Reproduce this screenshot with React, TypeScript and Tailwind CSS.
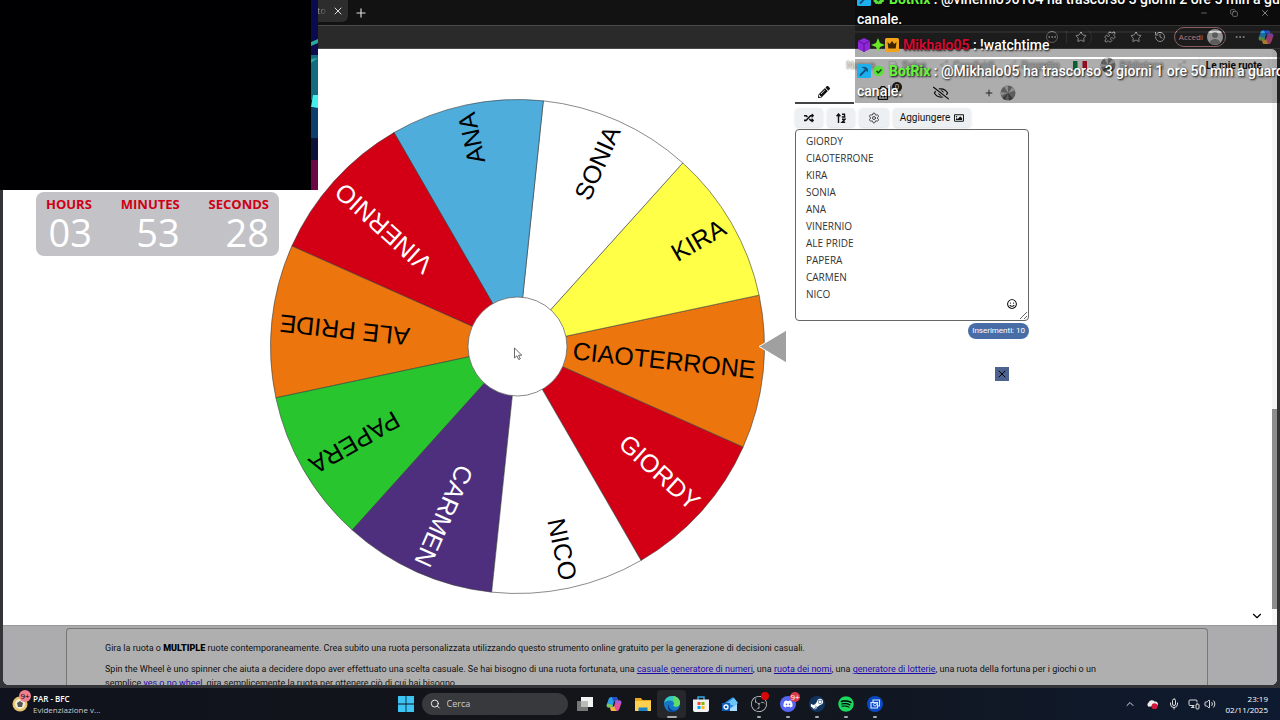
import React from 'react';
import { FaDiscord, FaPencilAlt, FaRandom, FaRegEyeSlash, FaRegImage, FaRegSmile, FaRegTrashAlt, FaShareAlt, FaSave, FaSpotify, FaSteamSymbol } from 'react-icons/fa';
import { SiObsstudio } from 'react-icons/si';
import { ChevronDown, ChevronUp, Copy, History, Mic, Minus, MonitorSmartphone, MoreHorizontal, Plus, Puzzle, Search, Settings, Star, Volume2, X } from 'lucide-react';

type Slice = { name: string; fill: string; ink: string };

const SLICES: Slice[] = [
  { name: 'GIORDY', fill: '#d30015', ink: '#fff' },
  { name: 'CIAOTERRONE', fill: '#ec750d', ink: '#000' },
  { name: 'KIRA', fill: '#ffff47', ink: '#000' },
  { name: 'SONIA', fill: '#ffffff', ink: '#000' },
  { name: 'ANA', fill: '#4eaddb', ink: '#000' },
  { name: 'VINERNIO', fill: '#d30015', ink: '#fff' },
  { name: 'ALE PRIDE', fill: '#ec750d', ink: '#000' },
  { name: 'PAPERA', fill: '#28c52e', ink: '#000' },
  { name: 'CARMEN', fill: '#4e2f7e', ink: '#fff' },
  { name: 'NICO', fill: '#ffffff', ink: '#000' },
];

const STEP = 360 / SLICES.length;
const CENTER = 247.5;
const RADIUS = 247;
const START = 24;

const point = (deg: number) => {
  const rad = (deg * Math.PI) / 180;
  return `${CENTER + RADIUS * Math.cos(rad)} ${CENTER + RADIUS * Math.sin(rad)}`;
};

const Wheel: React.FC = () => (
  <svg viewBox="0 0 517 496" className="w-[517px] shrink-0" role="img" aria-label="Ruota">
    {SLICES.map((s, i) => {
      const from = START - i * STEP;
      return (
        <g key={s.name}>
          <path d={`M${CENTER} ${CENTER} L${point(from)} A${RADIUS} ${RADIUS} 0 0 1 ${point(from + STEP)} Z`} fill={s.fill} stroke="#3a3a3a" strokeWidth="0.6" />
          <text
            x={CENTER + 239}
            y={CENTER + 7}
            textAnchor="end"
            fontSize="25"
            fill={s.ink}
            fontFamily="'Liberation Sans', sans-serif"
            transform={`rotate(${from + STEP / 2} ${CENTER} ${CENTER})`}
          >
            {s.name}
          </text>
        </g>
      );
    })}
    <circle cx={CENTER} cy={CENTER} r="49.5" fill="#fff" stroke="#555" strokeWidth="0.7" />
    <path d="M489 247.500 516.500 231V264Z" fill="#a0a0a0" stroke="#fff" strokeWidth="1" />
    <path d="M244.500 249v10l2.400-2.200 1.800 3.800 1.600-.8-1.700-3.600h3.200z" fill="#fff" stroke="#444" strokeWidth="0.8" />
  </svg>
);

const MiniWheel: React.FC = () => (
  <svg viewBox="0 0 16 16" className="size-4">
    <circle cx="8" cy="8" r="7.500" fill="#8a8a8a" />
    <path d="M8 8 4 1.500A7.500 7.500 0 0 1 8 .5ZM8 8 12.500 2A7.500 7.500 0 0 1 15 5.500ZM8 8 1 10.500A7.500 7.500 0 0 1 .6 7Z" fill="#cfcfcf" />
    <path d="M8 8 13 13.600A7.500 7.500 0 0 1 9 15.400ZM8 8 5 15A7.500 7.500 0 0 1 2.500 13Z" fill="#555" />
  </svg>
);

const CopilotIcon: React.FC = () => (
  <svg viewBox="0 0 16 16" className="size-4">
    <path d="M5.500 1h4.200c1 0 1.400.7 1.700 1.600L12 5H9.500C8.300 5 8 5.800 7.600 7L6.300 11.500H2.500C.8 11.500.4 10 .9 8.300L2.600 3.300C3.200 1.800 4 1 5.500 1Z" fill="#2b9fe8" />
    <path d="M5.500 1h4.200c1 0 1.400.7 1.700 1.600L12 5H9.500C8.700 5 8.200 5.400 7.900 6L7 4C6.400 2.300 6 1.500 5.500 1Z" fill="#2450c8" />
    <path d="M10.500 15H6.300c-1 0-1.400-.7-1.700-1.600L4 11h2.500c1.200 0 1.500-.8 1.900-2L9.700 4.500h3.800c1.700 0 2.100 1.500 1.600 3.200l-1.700 5c-.6 1.500-1.400 2.300-2.900 2.300Z" fill="#e0529c" />
    <path d="M10.500 15H6.300c-1 0-1.400-.7-1.700-1.600L4 11h2.500c.8 0 1.300-.4 1.600-1 .8 2 1.400 4 2.400 5Z" fill="#f5b53d" />
    <path d="m1.200 7.400-.3.900C.4 10 .8 11.500 2.500 11.500h3.800L7 9Z" fill="#7dc857" />
    <path d="m9.700 4.500 3.800 0c1.700 0 2.100 1.500 1.600 3.200L9 7Z" fill="#a45be0" />
  </svg>
);

const EdgeIcon: React.FC = () => (
  <svg viewBox="0 0 16 16" className="size-4">
    <circle cx="8" cy="8" r="8" fill="#1578c8" />
    <path d="M0 7.500C.4 3 3.800 0 8 0c4.800 0 8 3.400 8 6.800 0 2.700-2 4-4 4-1.600 0-2.600-.6-2.600-1.200 0-.5.700-.7.7-2C10 5.800 8 4.400 5.500 4.400 3 4.400.6 5.600 0 7.500Z" fill="#35c6c0" />
    <path d="M9 .1C13.500.5 16 3.600 16 6.800c0 2.700-2 4-4 4-1.600 0-2.600-.6-2.600-1.200 0-.5.700-.7.700-2C10 5 9.500 2 9 .1Z" fill="#5fdc6c" />
    <path d="M5.600 7C4.200 9 5 12.500 8 14c2 1 4.500.6 6.300-1.100-1.500 2.300-4 3.300-6.600 3.100C4 15.500 2.500 11 5.600 7Z" fill="#0c3f8c" />
  </svg>
);

const StoreIcon: React.FC = () => (
  <svg viewBox="0 0 16 16" className="size-4">
    <path d="M5 4V1h6v3" fill="none" stroke="#35a8e0" strokeWidth="1.500" />
    <path d="M0 3.500h16V14a2 2 0 0 1-2 2H2a2 2 0 0 1-2-2Z" fill="#f2f2f2" />
    <path d="M4.500 6h3v3h-3z" fill="#f25022" />
    <path d="M8.500 6h3v3h-3z" fill="#7fba00" />
    <path d="M4.500 10h3v3h-3z" fill="#00a4ef" />
    <path d="M8.500 10h3v3h-3z" fill="#ffb900" />
  </svg>
);

const ChatPick: React.FC = () => (
  <svg viewBox="0 0 14 14" className="size-3.5 shrink-0">
    <rect width="14" height="14" rx="1.500" fill="#1db0ee" />
    <path d="m3 11.500 5.500-5.500" stroke="#12507c" strokeWidth="1.800" />
    <path d="M4.500 3.500C7 2 10 3 11 5.500v3L7 4.500Z" fill="#12507c" />
  </svg>
);

const BotRow: React.FC<{ children: React.ReactNode }> = ({ children }) => (
  <div className="bg-black/32 px-0.5 py-0.5">
    <p className="flex items-center">
      <ChatPick />
      <svg viewBox="0 0 12 12" className="ml-0.5 mr-1 size-3 shrink-0">
        <path d="m6 .5 1.600 1 1.900.1.600 1.800 1.300 1.300-.6 1.800.2 1.900-1.700.9-1 1.600-1.900-.2L6 11.500l-1.400-.8-1.900.2-1-1.600L.4 8.400l.2-1.900L0 4.700l1.300-1.300.6-1.800 1.900-.1Z" fill="#5be03a" />
        <path d="m3.500 6 1.800 1.800L8.500 4.500" stroke="#123d17" strokeWidth="1.500" fill="none" />
      </svg>
      <span className="text-[#63f53d]">BotRix</span>
      <span className="whitespace-pre font-medium"> : {children}</span>
    </p>
    <p className="font-medium">canale.</p>
  </div>
);

const ChatOverlay: React.FC = () => (
  <aside className="absolute right-0 top-0 z-20 flex h-[103px] w-[425px] flex-col justify-end gap-0.5 overflow-hidden whitespace-nowrap font-['Roboto',sans-serif] text-sm font-bold leading-5 text-white [text-shadow:1px_1px_2px_#000]">
    <BotRow>@vinernio96104 ha trascorso 3 giorni 2 ore 5 min a guardare il</BotRow>
    <p className="flex items-center bg-black/32 px-0.5 py-0.5">
      <svg viewBox="0 0 14 14" className="size-3.5">
        <path d="m7 0 6 3v8l-6 3-6-3V3Z" fill="#8f27d8" />
        <path d="m1 3 6 3 6-3M7 6v8" stroke="#5b1296" fill="none" />
      </svg>
      <svg viewBox="0 0 14 14" className="size-3.5"><path d="M7 0 9 5l5 2-5 2-2 5-2-5-5-2 5-2Z" fill="#6be824" /></svg>
      <svg viewBox="0 0 14 14" className="mr-1 size-3.5">
        <rect width="14" height="14" rx="1.500" fill="#f3a317" />
        <path d="m2.500 4 2.300 2L7 3l2.200 3 2.300-2-.8 6.500H3.300Z" fill="#3c2400" />
      </svg>
      <span className="text-[#cf0a32]">Mikhalo05</span>
      <span className="whitespace-pre font-medium"> : !watchtime</span>
    </p>
    <BotRow>@Mikhalo05 ha trascorso 3 giorni 1 ore 50 min a guardare il</BotRow>
  </aside>
);

const CamOverlay: React.FC = () => (
  <div className="absolute left-0 top-0 z-20 flex h-[190px] w-[318px] bg-[#000003]">
    <svg viewBox="0 0 7 190" className="ml-auto w-[7px]">
      <path d="M0 0h7v190H0z" fill="#0b0a4e" />
      <path d="M0 55h7v45H0z" fill="#136d80" />
      <path d="M0 42l7-3v4l-7 3zM0 59l7-1-7 5z" fill="#28a99a" />
      <path d="M2 95h5v13l-7-1z" fill="#45f0ea" />
      <path d="M0 108h7v30H0z" fill="#0d3f6e" />
      <path d="M0 138h7v22H0z" fill="#0a1236" />
      <path d="M0 160h7v30H0z" fill="#6b0647" />
    </svg>
  </div>
);

const COUNTDOWN = [
  { label: 'HOURS', value: '03' },
  { label: 'MINUTES', value: '53' },
  { label: 'SECONDS', value: '28' },
];

const Countdown: React.FC = () => (
  <div className="absolute left-9 top-48 z-20 flex w-[243px] justify-between rounded-lg bg-[#c3c2c7] px-2.5 pb-1 pt-1 font-['Open_Sans',sans-serif]">
    {COUNTDOWN.map((c) => (
      <div key={c.label} className="text-right">
        <div className="text-[13px] font-bold leading-4 text-[#cf0014]">{c.label}</div>
        <div className="text-[38px] leading-10 text-white">{c.value}</div>
      </div>
    ))}
  </div>
);

const BrowserBar: React.FC = () => (
  <header>
    <div className="flex h-[25px] items-center justify-between bg-[#121212] pr-2.5 text-[#ddd]">
      <div className="flex h-full items-center">
        <div className="flex h-[22px] w-[348px] items-center justify-end gap-1.5 self-start rounded-br-md bg-[#2d2d2d] pr-1 font-['Open_Sans',sans-serif] text-[9px]">
          <span className="bg-linear-to-r from-white to-[#555] bg-clip-text text-transparent">etto</span>
          <button aria-label="Chiudi scheda"><X className="size-3" /></button>
        </div>
        <button aria-label="Nuova scheda" className="ml-1.5"><Plus className="size-3.5" /></button>
      </div>
      <div className="flex items-center gap-[22px]">
        <button aria-label="Riduci"><Minus className="size-2" /></button>
        <button aria-label="Ripristina"><Copy className="size-2" /></button>
        <button aria-label="Chiudi"><X className="size-2.5" /></button>
      </div>
    </div>
    <div className="flex h-6 items-center justify-end border-y border-[#4a4a4a] bg-[#2a2a2a] pr-1.5 text-[#ccc]">
      <div className="mr-3 flex h-5 items-center gap-2 rounded-r-full border-r border-[#444] pr-1">
        <MoreHorizontal className="size-3 rounded-full border border-[#888]" />
        <span className="h-3 w-px bg-[#444]" />
        <Star className="size-3" />
      </div>
      <Puzzle className="mr-3.5 size-3" />
      <Star className="mr-3 size-3" />
      <History className="mr-2 size-3" />
      <button className="mr-2 flex h-5 items-center gap-1 rounded-full border border-[#c98a90] pl-1 pr-0.5 font-['Open_Sans',sans-serif] text-[8px] text-[#ffb3b8]">
        Accedi
        <svg viewBox="0 0 16 16" className="size-4">
          <circle cx="8" cy="8" r="8" fill="#d5d5d5" />
          <circle cx="8" cy="6" r="3" fill="#888" />
          <path d="M2.500 13.500a6 6 0 0 1 11 0 8 8 0 0 1-11 0Z" fill="#888" />
        </svg>
      </button>
      <MoreHorizontal className="mr-3 size-3" />
      <CopilotIcon />
    </div>
  </header>
);

const SiteNav: React.FC = () => (
  <nav className="flex h-8 items-center justify-end gap-[13px] pr-1 font-['Roboto',sans-serif] text-[10px] text-[#e2e2e2] [text-shadow:0_0_2px_#333]">
    <a href="#nuovo">Nuovo</a>
    <a href="#salva" className="flex items-center gap-1"><FaSave className="size-2.5" />Salva</a>
    <a href="#condividi" className="flex items-center gap-1"><FaShareAlt className="size-2.5" />Condividi</a>
    <a href="#progetto" className="flex items-center gap-1"><FaPencilAlt className="size-2.5" />Progetto</a>
    <svg viewBox="0 0 14 9" className="w-3.5">
      <path d="M0 0h14v9H0z" fill="#fff" />
      <path d="M0 0h4.500v9H0z" fill="#0a8f45" />
      <path d="M9.500 0H14v9H9.500z" fill="#d4142c" />
    </svg>
    <a href="#biblioteca" className="flex items-center gap-1"><MiniWheel />Biblioteca</a>
    <FaShareAlt className="size-2.5" />
    <button className="rounded-sm px-1.5 py-1 text-[10px] font-bold text-[#111] shadow-sm [text-shadow:none]">Le mie ruote</button>
  </nav>
);

const EntriesPanel: React.FC = () => (
  <section className="flex w-[234px] shrink-0 flex-col font-['Roboto',sans-serif]">
    <div className="grid h-[22px] grid-cols-4 items-center text-[#111]">
      <button aria-label="Modifica" className="flex h-full items-center justify-center border-b-2 border-[#444]"><FaPencilAlt className="size-3" /></button>
      <button aria-label="Elimina" className="relative flex justify-center">
        <FaRegTrashAlt className="size-3.5" />
        <span className="absolute -top-1 right-2.5 size-2.5 rounded-full bg-[#222] text-center text-[8px] leading-[10px] text-white">0</span>
      </button>
      <button aria-label="Nascondi" className="flex justify-center"><FaRegEyeSlash className="size-4" /></button>
      <button aria-label="Aggiungi ruota" className="flex items-center justify-center gap-1.5"><Plus className="size-2.5" /><MiniWheel /></button>
    </div>
    <div className="mb-0.5 mt-1 flex h-[19px] gap-1 text-[10px] text-[#111]">
      <button aria-label="Mescola" className="flex w-7 items-center justify-center rounded-sm bg-[#edf0f2] shadow-sm"><FaRandom className="size-2.5" /></button>
      <button aria-label="Ordina" className="flex w-7 items-center justify-center rounded-sm bg-[#edf0f2] shadow-sm">
        <svg viewBox="0 0 10 10" className="size-2.5" fill="none" stroke="#111" strokeWidth="1.400">
          <path d="M2.500 10V1.500M.6 3.200 2.500 1l1.900 2.200M6 1.200h2.500V4M6 6.200h3L6 9.300h3.200M5.800 4h3.600" />
        </svg>
      </button>
      <button aria-label="Opzioni" className="flex w-[30px] items-center justify-center rounded-sm bg-[#edf0f2] text-[#444] shadow-sm"><Settings className="size-3" /></button>
      <button className="flex w-[78px] items-center justify-center gap-1 rounded-sm bg-[#edf0f2] shadow-sm">Aggiungere <FaRegImage className="size-2.5" /></button>
    </div>
    <div className="relative">
      <textarea
        aria-label="Inserimenti"
        defaultValue={SLICES.map((s) => s.name).join('\n')}
        className="block h-[192px] w-full overflow-hidden rounded-sm border border-[#666] bg-white px-2.5 py-[3px] font-['Open_Sans',sans-serif] text-[10px] leading-[17px] text-[#333]"
      />
      <button aria-label="Emoji" className="absolute bottom-3 right-3"><FaRegSmile className="size-2.5" /></button>
    </div>
    <span className="mt-0.5 self-end rounded-full bg-[#486da6] px-1 text-[8px] leading-4 text-white">Inserimenti: 10</span>
    <button aria-label="Chiudi annuncio" className="mr-5 mt-7 flex size-3.5 items-center justify-center self-end bg-[#4c6390] text-black"><X className="size-3" /></button>
  </section>
);

const link = 'text-[#1a0dab] underline';

const SiteText: React.FC = () => (
  <footer className="h-15 shrink-0 overflow-hidden border-t border-[#999] bg-[#acacaf] pl-[63px] pr-[69px] pt-0.5">
    <article className="rounded-t-sm border border-b-0 border-[#777] bg-[#afafaf] px-[38px] pt-3 font-['Roboto',sans-serif] text-[9px] leading-[14px] text-[#111]">
      <p className="mb-[7px]">Gira la ruota o <b className="font-black text-black">MULTIPLE</b> ruote contemporaneamente. Crea subito una ruota personalizzata utilizzando questo strumento online gratuito per la generazione di decisioni casuali.</p>
      <p className="pr-13">
        Spin the Wheel è uno spinner che aiuta a decidere dopo aver effettuato una scelta casuale. Se hai bisogno di una ruota fortunata, una <a href="#numeri" className={link}>casuale generatore di numeri</a>, una <a href="#nomi" className={link}>ruota dei nomi</a>, una <a href="#lotterie" className={link}>generatore di lotterie</a>, una ruota della fortuna per i giochi o un semplice <a href="#yesno" className={link}>yes o no wheel</a>, gira semplicemente la ruota per ottenere ciò di cui hai bisogno.
      </p>
    </article>
  </footer>
);

const TaskApp: React.FC<{ label: string; state?: 'open' | 'active'; children: React.ReactNode }> = ({ label, state, children }) => (
  <button aria-label={label} className={`relative flex h-7 w-[29px] items-center justify-center ${state === 'active' ? 'rounded-sm bg-white/8' : ''}`}>
    {children}
    {state && <span className={`absolute bottom-0 h-0.5 rounded-full bg-[#aaa] ${state === 'active' ? 'w-2.5' : 'w-1'}`} />}
  </button>
);

const Taskbar: React.FC = () => (
  <div className="grid h-8 shrink-0 grid-cols-[1fr_auto_1fr] items-center bg-linear-to-r from-[#10131d] via-[#131519] to-[#0e1a30] font-['Open_Sans',sans-serif] text-[8px] text-white">
    <div className="flex items-center gap-1 pl-3">
      <div className="relative pr-px">
        <svg viewBox="0 0 16 16" className="size-4"><circle cx="8" cy="8" r="7.500" fill="#e8c66f" /><circle cx="8" cy="8" r="5" fill="#f5efd8" /><path d="m8 5 3 2-1 4H6L5 7Z" fill="#555" /></svg>
        <span className="absolute -right-0.5 -top-1.5 size-3 rounded-full bg-[#f0808e] text-center text-[8px] leading-3 text-black">9+</span>
      </div>
      <div className="leading-[11px]">
        <div className="font-semibold">PAR - BFC</div>
        <div className="text-[#ccc]">Evidenziazione v...</div>
      </div>
    </div>
    <div className="flex items-center">
      <TaskApp label="Start">
        <svg viewBox="0 0 16 16" className="size-4" fill="#3cc4f5"><path d="M0 0h7.600v7.600H0zM8.400 0H16v7.600H8.400zM0 8.400h7.600V16H0zM8.400 8.400H16V16H8.400z" /></svg>
      </TaskApp>
      <label className="mx-0.5 flex h-[22px] w-[146px] items-center gap-1.5 rounded-full bg-[#38393c] pl-2">
        <Search className="size-3" />
        <input placeholder="Cerca" aria-label="Cerca" className="w-full bg-transparent text-[9px] outline-none placeholder:text-[#ccc]" />
      </label>
      <TaskApp label="Visualizzazione attività">
        <svg viewBox="0 0 16 16" className="size-4"><path d="M4 1h12v10H4z" fill="#f3f3f3" /><path d="M0 5h11v10H0z" fill="#777" /><path d="M4 5h7v6H4z" fill="#bbb" /></svg>
      </TaskApp>
      <TaskApp label="Copilot"><CopilotIcon /></TaskApp>
      <TaskApp label="Esplora file">
        <svg viewBox="0 0 16 16" className="size-4"><path d="M0 2h6l1.500 2H16v4H0z" fill="#e8a91c" /><path d="M0 5h16v10H0z" fill="#fdd04f" /><path d="M3.500 11.500h9V15h-9z" fill="#1d83c8" /></svg>
      </TaskApp>
      <TaskApp label="Edge" state="active"><EdgeIcon /></TaskApp>
      <TaskApp label="Store"><StoreIcon /></TaskApp>
      <TaskApp label="Outlook">
        <svg viewBox="0 0 16 16" className="size-4"><path d="M1 8 11 1l4 5v9H3z" fill="#2b8be8" /><path d="M5 7l7-5 4 5-4 3z" fill="#6cc6f7" /><path d="M4 15 15 8v7z" fill="#a6dcff" /><path d="M0 7h8v8H0z" fill="#0f5bb8" /><circle cx="4" cy="11" r="2" fill="none" stroke="#fff" strokeWidth="1.300" /></svg>
      </TaskApp>
      <TaskApp label="OBS" state="open">
        <SiObsstudio className="size-4 text-[#ccc]" />
        <span className="absolute right-1 top-0.5 size-2 rounded-full bg-[#d80808]" />
      </TaskApp>
      <TaskApp label="Discord" state="open">
        <span className="flex size-4 items-center justify-center rounded-full bg-[#5865f2]"><FaDiscord className="size-2.5" /></span>
        <span className="absolute right-0.5 top-0.5 size-2.5 rounded-full bg-[#d83c4b] text-center text-[8px] leading-[10px]">9+</span>
      </TaskApp>
      <TaskApp label="Steam" state="open"><span className="flex size-4 items-center justify-center rounded-full bg-[#10345e]"><FaSteamSymbol className="size-3.5" /></span></TaskApp>
      <TaskApp label="Spotify" state="open"><span className="rounded-full bg-black"><FaSpotify className="size-4 text-[#1ed760]" /></span></TaskApp>
      <TaskApp label="Streaming" state="open">
        <svg viewBox="0 0 16 16" className="size-4"><circle cx="8" cy="8" r="8" fill="#0b49c4" /><path d="M4 6.500h6.500V12H4zM6 6.500V4h6.500v6h-2" fill="none" stroke="#dce8ff" strokeWidth="1.100" /><circle cx="8" cy="8.500" r="1.500" fill="none" stroke="#dce8ff" /></svg>
      </TaskApp>
    </div>
    <div className="flex items-center justify-end pr-3 text-[#ddd]">
      <ChevronUp className="mr-2.5 size-3" />
      <svg viewBox="0 0 14 12" className="mr-2.5 w-3"><path d="M3 9a3 3 0 0 1 0-5 4 4 0 0 1 7-1 3 3 0 0 1 3 5z" fill="#eee" /><circle cx="10" cy="8.500" r="3.500" fill="#d3183b" /></svg>
      <Mic className="mr-2 size-3" />
      <MonitorSmartphone className="mr-1 size-3" />
      <Volume2 className="mr-2.5 size-3" />
      <div className="text-right leading-[11px] text-white">
        <div>23:19</div>
        <div>02/11/2025</div>
      </div>
    </div>
  </div>
);

const App: React.FC = () => (
  <div className="relative flex h-screen flex-col overflow-hidden bg-[#333437]">
    <BrowserBar />
    <div className="mx-[3px] mb-[3px] flex min-h-0 flex-1 flex-col overflow-hidden rounded-b-md rounded-tr-md bg-white">
      <div className="flex min-h-0 flex-1">
        <main className="flex min-w-0 flex-1 flex-col">
          <SiteNav />
          <div className="flex justify-center gap-2 pl-6 pt-px">
            <div className="pt-[17px]"><Wheel /></div>
            <EntriesPanel />
          </div>
          <button aria-label="Espandi" className="mb-0.5 mr-2 mt-auto self-end"><ChevronDown className="size-3.5" /></button>
        </main>
        {/* page scrollbar */}
        <div className="w-[5px] bg-[#f6f6f6] pt-[360px]"><div className="h-[200px] bg-[#8d8d8d]" /></div>
      </div>
      <SiteText />
    </div>
    <Taskbar />
    <CamOverlay />
    <Countdown />
    <ChatOverlay />
  </div>
);

export default App;
